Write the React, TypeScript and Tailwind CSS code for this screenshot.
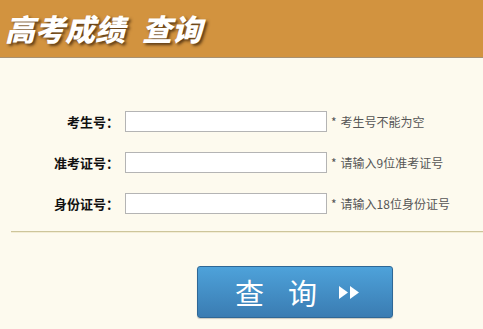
import React from "react";

const rows = [
  { label: "考生号：", hint: "考生号不能为空" },
  { label: "准考证号：", hint: "请输入9位准考证号" },
  { label: "身份证号：", hint: "请输入18位身份证号" },
];

export default function App() {
  const font = { fontFamily: '"Noto Sans CJK SC", "Noto Sans", sans-serif' };
  const shadow = { textShadow: "2px 2px 3px rgba(60,35,10,0.8)" };
  return (
    <div className="w-[483px] h-[329px] bg-[#fdfaee] overflow-hidden" style={font}>
      <div className="h-[58px] bg-[#d2933f] border-b border-[#a89070] flex items-center pl-[5px]">
        <span className="text-white text-[30px] font-black italic leading-none mt-[-2px]" style={shadow}>
          高考成绩
        </span>
        <span className="ml-[17px] text-white text-[30px] font-black italic leading-none mt-[-2px]" style={shadow}>
          查询
        </span>
      </div>
      <div className="pt-[53px] flex flex-col gap-[20px]">
        {rows.map((r) => (
          <div key={r.label} className="flex items-center h-[21px]">
            <div className="w-[120px] text-right text-[13px] font-bold text-[#111] leading-none pr-[1px]">
              {r.label}
            </div>
            <div className="ml-[5px] w-[202px] h-[21px] bg-white border border-[#b4b4b4]" />
            <div className="ml-[4px] text-[12px] text-[#555] leading-none">
              <span className="mr-[4px]">*</span>
              {r.hint}
            </div>
          </div>
        ))}
      </div>
      <div className="ml-[11px] mt-[17px] h-[2px] bg-[#cdc59a] border-b border-[#f3edd5]" />
      <div className="mt-[33px] ml-[197px] w-[196px] h-[52px] rounded-[3px] border border-[#2e6796] bg-gradient-to-b from-[#4ea2da] to-[#3a7cb2] flex items-center shadow-[0_1px_1px_rgba(0,0,0,0.2)]">
        <span className="ml-[37px] text-white text-[29px] leading-none">查</span>
        <span className="ml-[24px] text-white text-[29px] leading-none">询</span>
        <svg className="ml-[22px]" width="22" height="13" viewBox="0 0 22 13">
          <polygon points="0,0 9,6.5 0,13" fill="white" />
          <polygon points="11,0 20,6.5 11,13" fill="white" />
        </svg>
      </div>
    </div>
  );
}
